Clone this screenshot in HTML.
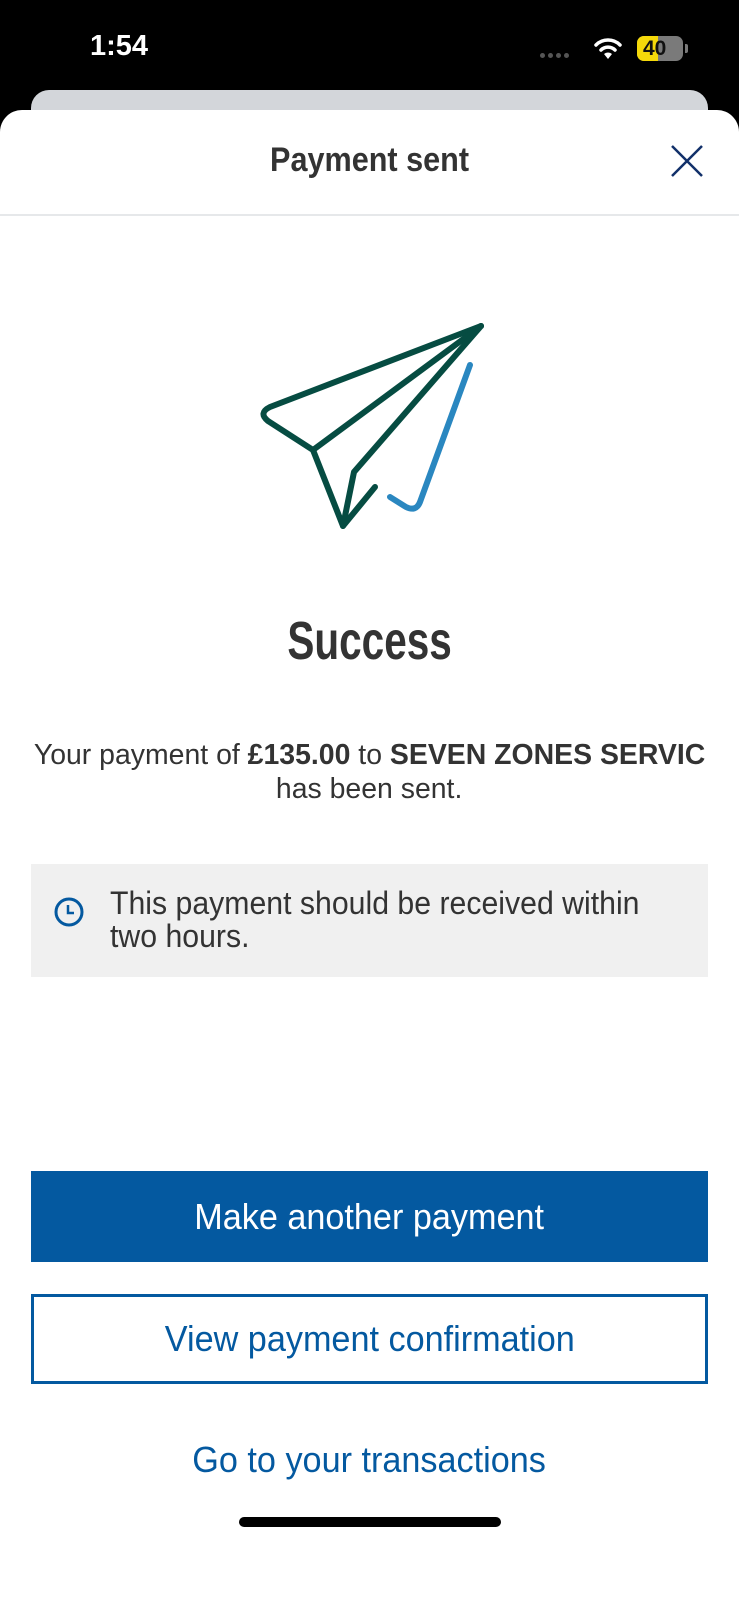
<!DOCTYPE html>
<html><head><meta charset="utf-8"><style>
*{margin:0;padding:0;box-sizing:border-box}
body{width:739px;height:1600px;background:#000;position:relative;overflow:hidden;font-family:"Liberation Sans",Arial,sans-serif}
.abs{position:absolute}
.time{left:90px;top:30px;color:#fff;font-size:29px;font-weight:bold}
.card{left:31px;top:90px;width:677px;height:40px;background:#d3d6da;border-radius:18px}
.sheet{left:0;top:110px;width:739px;height:1490px;background:#fff;border-radius:22px 22px 0 0}
.narrow{font-weight:bold;color:#333}
span.s{display:inline-block;white-space:nowrap}
.title{left:0;width:739px;top:141px;text-align:center;font-size:34px}
.title span{transform:scaleX(0.9)}
.div{left:0;top:214px;width:739px;height:2px;background:#e6e8ea}
.succ{left:0;width:739px;top:610px;text-align:center;font-size:54px}
.succ span{transform:scaleX(0.75)}
.msg{left:0;width:739px;top:738px;text-align:center;font-size:29px;line-height:34px;color:#333}
.msg span{transform:scaleX(0.98)}
.info{left:31px;top:864px;width:677px;height:113px;background:#f0f0f0}
.info p{position:absolute;left:79px;top:23px;font-size:32px;line-height:33px;color:#333;transform:scaleX(0.945);transform-origin:0 0;white-space:nowrap}
.btn{left:31px;width:677px;display:flex;align-items:center;justify-content:center;font-size:36px}
.btn span{transform:scaleX(0.95)}
.b1{top:1171px;height:91px;background:#0459a0;color:#fff}
.b2{top:1294px;height:90px;border:3px solid #0459a0;color:#0459a0;background:#fff}
.link{top:1420px;height:80px;color:#0459a0}
.home{left:239px;top:1517px;width:262px;height:10px;border-radius:5px;background:#000}
</style></head><body>
<div class="abs time">1:54</div>
<div class="abs" style="left:540px;top:53px;display:flex;gap:3px"><i style="width:5px;height:5px;background:#555;border-radius:50%"></i><i style="width:5px;height:5px;background:#555;border-radius:50%"></i><i style="width:5px;height:5px;background:#555;border-radius:50%"></i><i style="width:5px;height:5px;background:#555;border-radius:50%"></i></div>
<svg class="abs" style="left:594px;top:36px" width="28" height="24" viewBox="0 0 28 24"><path d="M2 9 A17 17 0 0 1 26 9" stroke="#fff" stroke-width="3.5" fill="none" stroke-linecap="round"/><path d="M7 14 A10 10 0 0 1 21 14" stroke="#fff" stroke-width="3.5" fill="none" stroke-linecap="round"/><path d="M10 18 L14 23 L18 18 A6 6 0 0 0 10 18Z" fill="#fff"/></svg>
<div class="abs" style="left:637px;top:36px;width:46px;height:25px;border-radius:7px;background:#7a7a7a;overflow:hidden"><div style="width:21px;height:25px;background:#f5d90a"></div><span style="position:absolute;left:6px;top:1px;font-size:21px;font-weight:bold;color:#111">40</span></div>
<div class="abs" style="left:685px;top:44px;width:3px;height:9px;background:#7a7a7a;border-radius:0 2px 2px 0"></div>
<div class="abs card"></div>
<div class="abs sheet"></div>
<div class="abs title narrow"><span class="s">Payment sent</span></div>
<svg class="abs" style="left:670px;top:144px" width="34" height="34" viewBox="0 0 34 34"><path d="M2 2 L32 32 M32 2 L2 32" stroke="#12306a" stroke-width="2.5"/></svg>
<div class="abs div"></div>
<svg class="abs" style="left:0;top:0" width="739" height="600">
<g fill="none" stroke="#064c42" stroke-width="6" stroke-linecap="round" stroke-linejoin="round">
<path d="M481 326 L270 407 Q258 413 268 421 L313 450 L343 526 L375 487"/>
<path d="M481 326 L313 450"/>
<path d="M481 326 L354 472 L343 526"/>
</g>
<path d="M470 365 L420 502 Q416 512 406 507 L390 497" fill="none" stroke="#2a87c0" stroke-width="6" stroke-linecap="round" stroke-linejoin="round"/>
</svg>
<div class="abs succ narrow"><span class="s">Success</span></div>
<div class="abs msg"><span class="s">Your payment of <b>£135.00</b> to <b>SEVEN ZONES SERVIC</b></span><br><span class="s">has been sent.</span></div>
<div class="abs info">
<svg style="position:absolute;left:22px;top:32px" width="32" height="32" viewBox="0 0 32 32"><circle cx="16" cy="16" r="13" stroke="#0459a0" stroke-width="3" fill="none"/><path d="M15 9 V17 H21" stroke="#0459a0" stroke-width="2.5" fill="none"/></svg>
<p>This payment should be received within<br>two hours.</p>
</div>
<div class="abs btn b1"><span class="s">Make another payment</span></div>
<div class="abs btn b2"><span class="s">View payment confirmation</span></div>
<div class="abs btn link"><span class="s">Go to your transactions</span></div>
<div class="abs home"></div>
</body></html>
